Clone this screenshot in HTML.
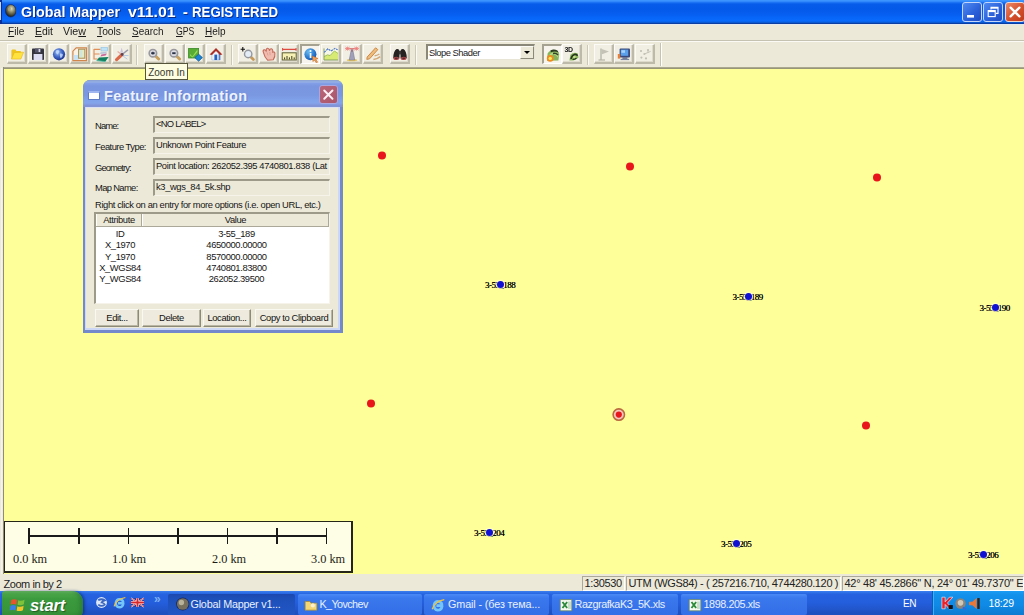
<!DOCTYPE html>
<html><head><meta charset="utf-8">
<style>
*{margin:0;padding:0;box-sizing:border-box}
html,body{width:1024px;height:615px;overflow:hidden;background:#ffff99;font-family:"Liberation Sans",sans-serif;font-size:11px;color:#000}
.a{position:absolute}
.t{position:absolute;white-space:nowrap;line-height:1}
/* title bar */
#title{left:0;top:0;width:1024px;height:24px;background:linear-gradient(#3e98ff 0,#3a92fd 1px,#1c74f4 2.5px,#075cea 4px,#0459e8 9px,#065ef0 14px,#0766f8 18px,#096bfb 21px,#0a58d2 22.5px,#0a3ea4 23.5px,#0a3ea4 24px);box-shadow:inset 2px 0 0 #0a2e96}
#title .cap{top:4.1px;font-weight:bold;font-size:15px;color:#fff;text-shadow:1px 1px 0 #0a2e8a;transform-origin:0 0;display:inline-block}
#title .glb{position:absolute;left:4.6px;top:4px;width:11.5px;height:13.5px;filter:blur(.5px)}
#title .le{position:absolute;left:0;top:2px;width:1px;height:18px;background:#c4d8fa}
.tb{position:absolute;top:2px;width:20px;height:20px;border:1px solid #c4d6fa;border-radius:3px;background:linear-gradient(135deg,#4f8af2,#2a5fd8 60%,#1f4cc4)}
.tb svg{position:absolute;left:0;top:0;width:18px;height:18px}
/* menu */
#menu{left:0;top:24px;width:1024px;height:16px;background:#ece9d8;border-top:1px solid #e6e9ee}
#menu span{position:absolute;top:-.2px;font-size:11px;line-height:13px;color:#1c1c1c;transform-origin:0 0;display:inline-block;white-space:nowrap}
#menu u{text-decoration-thickness:1px;text-underline-offset:1px}
#tool{left:0;top:40px;width:1024px;height:28px;background:#ece9d8;border-top:1px solid #c5c2b2;box-shadow:inset 0 1px 0 #fbfaf5}
#mline{left:3px;top:67px;width:1021px;height:2px;background:linear-gradient(#b3b199,#8f8d6c)}
#vline{left:3px;top:67px;width:1px;height:507px;background:#8f8d76}
.btn{position:absolute;top:3px;width:20px;height:20px;border:1px solid;border-width:1px 2px 2px 1px;border-color:#fcfbf6 #bdbaa9 #bdbaa9 #fcfbf6;background:#f1efe4;box-shadow:inset -1px -1px 0 #dedbcc}
.btn.dn{border-width:2px 1px 1px 2px;border-color:#a5a292 #fff #fff #a5a292;background:#f6f4ec;box-shadow:none}
.sep{position:absolute;top:4px;width:2px;height:20px;border-left:1px solid #cbc8b8;border-right:1px solid #fbfaf4}

.btn svg{position:absolute;left:.5px;top:.5px;width:16px;height:16px;filter:blur(.45px)}
.grip{position:absolute;top:4px;width:3px;height:20px;border-left:1px solid #fbfaf4;border-right:1px solid #cfccbc}
.tend{position:absolute;top:2px;width:2px;height:23px;border-left:1px solid #c5c2b2;border-right:1px solid #fff}
.combo{position:absolute;left:425.5px;top:3px;width:109.5px;height:16px;background:#fff;border:1px solid;border-width:2px 1px 1px 2px;border-color:#8a8878 #e8e5d6 #e8e5d6 #8a8878}
.combo span{position:absolute;left:1.5px;top:1px;font-size:9.4px;letter-spacing:-.5px;line-height:11px;white-space:nowrap;color:#1c1c1c}
.combo .dd{position:absolute;right:0;top:0;width:14.5px;height:13px;background:#ece9d8;border:1px solid;border-color:#fbfaf4 #8c897a #8c897a #fbfaf4}
.combo .dd i{position:absolute;left:3.5px;top:3.5px;border:3px solid transparent;border-top:3.5px solid #000;border-bottom:0}
/* map */
#map{left:3px;top:68px;width:1021px;height:506px;background:#ffff99}
#lb{left:0;top:68px;width:3px;height:506px;background:linear-gradient(90deg,#e8e5d2,#f6f4ea 1.5px,#ece9d8 3px)}
.rds{position:absolute;left:0;top:0;width:1021px;height:506px;filter:blur(.3px)}
.bd{position:absolute;width:7px;height:7px;border-radius:50%;background:#1010d2;box-shadow:0 0 1px 1px rgba(255,255,230,.8)}
.pl{position:absolute;white-space:nowrap;font-family:"Liberation Serif",serif;font-size:9px;line-height:9px;letter-spacing:-.55px;color:#000;text-shadow:0 0 .4px #222}

.sel{position:absolute;width:14px;height:14px;filter:blur(.3px)}
#scale{position:absolute;left:1px;top:453px;width:349px;height:52px;background:#fefee7;border:1px solid #262618;border-width:1px 2px 2px 1px}
#scale .ln{position:absolute;left:23.4px;top:13.2px;width:298.6px;height:1.6px;background:#1a1a1a}
#scale i{position:absolute;top:6px;width:1.6px;height:16px;background:#1a1a1a}
#scale span{position:absolute;top:31px;font-family:"Liberation Serif",serif;font-size:12.3px;line-height:12px;white-space:nowrap;color:#1c1c14}
#tip{position:absolute;z-index:5;left:145px;top:63px;width:43px;height:16.5px;background:#fdfde2;border:1px solid #55553c;font-size:10px;line-height:17px;text-align:center;white-space:nowrap;color:#38382c;overflow:hidden}
#dlg{position:absolute;left:80px;top:12px;width:260px;height:253px;background:#7488cc;border-radius:7px 7px 0 0;overflow:hidden}
#dlg .dt{position:absolute;left:0;top:0;width:260px;height:27px;background:linear-gradient(#8aa0d0 0,#96b0e4 2px,#819ee6 3.5px,#7a96e0 6px,#7a97e1 15px,#7fa2ea 20px,#84a4ea 23px,#8194d8 25.5px,#8394d4 27px)}
#dlg .dt .ic{position:absolute;left:5px;top:11px;width:12px;height:9px;background:#fff;border:1px solid #5f7cc6;border-top:2px solid #9fb6ee;border-radius:1px}
#dlg .dt span{position:absolute;left:21px;top:8px;font-weight:bold;font-size:14.5px;line-height:16px;letter-spacing:.38px;color:#edf2fc;white-space:nowrap;text-shadow:1px 1px 0 #6580cc}
#dlg .dt .cx{position:absolute;left:236px;top:5px;width:19px;height:19px;border-radius:3px;background:linear-gradient(135deg,#b9667a,#a9566a);border:1px solid #aaa6e0}
#dlg .dt .cx svg{position:absolute;left:0;top:0;width:17px;height:17px}
#dlg .lr{position:absolute;left:2px;top:27px;width:255px;height:223px;background:#ccd6f5}
#dlg .db{position:absolute;left:3px;top:27px;width:252px;height:221px;background:#ece9d8;box-shadow:inset 0 1px 0 #dbe1f2;font-size:9.4px;letter-spacing:-.38px;color:#161616}
#dlg .l{position:absolute;left:9px;white-space:nowrap;line-height:11px}
#dlg .f{position:absolute;left:67px;width:177px;height:17px;border:1px solid;border-width:2px 1px 1px 2px;border-color:#9d9a8a #f6f4ea #f6f4ea #9d9a8a;padding:0 0 0 1px;line-height:12px;white-space:nowrap;overflow:hidden}
#dlg .lst{position:absolute;left:8px;top:105px;width:236px;height:92px;background:#fff;border:1px solid;border-width:2px 1px 1px 2px;border-color:#9d9a8a #f6f4ea #f6f4ea #9d9a8a}
#dlg .hd{position:absolute;left:0;top:0;width:233px;height:13px;background:#ece9d8;border-bottom:1px solid #aca899}
#dlg .hd b{position:absolute;top:0;height:12px;font-weight:normal;text-align:center;line-height:12.5px;border-right:1px solid #aca899;border-left:1px solid #fff}
#dlg table{position:absolute;left:0;top:14px;border-collapse:collapse}
#dlg td{height:11.3px;line-height:11.3px;padding:0;text-align:center;white-space:nowrap}
#dlg td:first-child{width:48px}#dlg td+td{width:186px}
#dlg .pb{position:absolute;top:202px;height:18px;background:#eeebde;border:1px solid;border-color:#f9f8f1 #8d8a78 #8d8a78 #f9f8f1;box-shadow:inset -1px -1px 0 #b9b6a4;color:#111;text-align:center;line-height:15px;white-space:nowrap}
#status .zt{font-size:11px;letter-spacing:-.45px;color:#222}
.pane{letter-spacing:-.36px;color:#222}
#start{position:absolute;left:2px;top:0;width:81px;height:30px;border-radius:3px 11px 11px 3px;background:linear-gradient(#6cba66 0,#4aa648 3px,#3c9a3e 8px,#38953a 20px,#2f8232 30px);box-shadow:2px 0 3px rgba(10,40,120,.55),inset -3px 0 4px rgba(20,80,40,.35)}
#start .flag{position:absolute;left:6.5px;top:4.5px;width:18px;height:18px;filter:blur(.5px)}
#start span{position:absolute;left:28px;top:4.5px;color:#fff;font-style:italic;font-weight:bold;font-size:16.5px;line-height:19px;letter-spacing:-.1px;text-shadow:1px 1px 1px #1f5a22}
.ql{position:absolute;top:5px;width:13px;height:13px}.ql svg{width:13px;height:13px;filter:blur(.3px)}
.chev{position:absolute;left:154px;top:2px;color:#7cb0f6;font-size:12px;line-height:12px;font-weight:bold}
.tk .ti{position:absolute;left:7px;top:3.5px;width:14px;height:14px;filter:blur(.3px)}
.tk span{position:absolute;left:22.5px;top:0;letter-spacing:-.42px}
.en{position:absolute;left:903px;top:7px;color:#fff;font-size:10px;line-height:11px;letter-spacing:-.3px}
#tray{position:absolute;left:932px;top:0;width:92px;height:24px;background:linear-gradient(#1c9cf4 0,#1290ea 4px,#0f8ae6 14px,#0d7ad0 24px);border-left:1px solid #0a5cb8;box-shadow:inset 1px 0 0 #3ab0f8}
#tray .tr{position:absolute;top:6px;width:13px;height:13px;filter:blur(.3px)}
#tray span{position:absolute;left:55.5px;top:7px;color:#fff;font-size:10.5px;line-height:11px;letter-spacing:-.2px}
/* status */
#status{left:0;top:574px;width:1024px;height:17px;background:#ece9d8}
.pane{position:absolute;top:2px;height:15px;border:1px solid;border-color:#aca899 #fff #fff #aca899;font-size:11px;line-height:13px;padding-left:1.5px;white-space:nowrap;overflow:hidden}
/* taskbar */
#task{left:0;top:591px;width:1024px;height:24px;background:linear-gradient(#3a80f0 0,#2663e0 3px,#245edc 12px,#1f50c0 22px)}
.tk{position:absolute;top:3px;height:21px;border-radius:2px;background:linear-gradient(#4a8af5,#3a78ee 4px,#336fe6);color:#e9f0fd;font-size:10.8px;line-height:21px;white-space:nowrap;overflow:hidden}
.tk.act{background:linear-gradient(#1b48ae,#1e50ba 5px,#2156c4)}
</style></head><body>
<div id="title" class="a"><div class="le"></div><svg class="glb" viewBox="0 0 16 16" preserveAspectRatio="none"><defs><radialGradient id="g0" cx=".56" cy=".34" r=".62"><stop offset="0" stop-color="#deddc6"/><stop offset=".45" stop-color="#8c8a68"/><stop offset="1" stop-color="#26261c"/></radialGradient></defs><circle cx="8" cy="8" r="7.4" fill="url(#g0)" stroke="#162a66" stroke-width="1"/><path d="M4 5 Q6.5 3 8.5 5.2 Q7 8 5.4 8.6 Q3.6 7.4 4 5Z" fill="#a8a47c" opacity=".8"/></svg><span class="t cap" style="left:20.5px;transform:scaleX(.95)">Global Mapper</span><span class="t cap" style="left:127.5px;transform:scaleX(1.054)">v11.01</span><span class="t cap" style="left:182.8px">-</span><span class="t cap" style="left:192.3px;transform:scaleX(.882)">REGISTERED</span>
<div class="tb" style="left:962px"><svg viewBox="0 0 18 18"><rect x="4" y="12" width="7" height="2.6" fill="#fff"/></svg></div><div class="tb" style="left:983px"><svg viewBox="0 0 18 18"><path d="M7 6.5 L7 4.4 L14 4.4 L14 10.4 L12 10.4" fill="none" stroke="#fff" stroke-width="1.1"/><path d="M7 4.9 L14 4.9" stroke="#fff" stroke-width="1.6"/><rect x="4.2" y="7.6" width="7" height="6" fill="none" stroke="#fff" stroke-width="1.1"/><path d="M4.2 8.2 L11.2 8.2" stroke="#fff" stroke-width="1.8"/></svg></div><div class="tb" style="left:1005px;border-color:#f0d8d0;background:linear-gradient(135deg,#ea8a68,#d4502c 55%,#c03a1a)"><svg viewBox="0 0 18 18"><path d="M4.6 4.6 L13.4 13.4 M13.4 4.6 L4.6 13.4" stroke="#fff" stroke-width="2.3" stroke-linecap="round"/></svg></div></div>
<div id="menu" class="a"><span style="left:7.5px;transform:scaleX(.915)"><u>F</u>ile</span><span style="left:34.5px;transform:scaleX(.95)"><u>E</u>dit</span><span style="left:63px;transform:scaleX(.973)">Vie<u>w</u></span><span style="left:97px;transform:scaleX(.935)"><u>T</u>ools</span><span style="left:132.3px;transform:scaleX(.903)"><u>S</u>earch</span><span style="left:175.5px;transform:scaleX(.79)"><u>G</u>PS</span><span style="left:204.7px;transform:scaleX(.907)"><u>H</u>elp</span></div>
<div id="tool" class="a">
<div class="btn" style="left:7px"><svg viewBox="0 0 16 16"><path d="M2.4 4.6 L2.4 13 L11.8 13 L11.8 5 L7.4 5 L6.4 3.4 L3.2 3.4 Z" fill="#eec41e"/><path d="M2.5 13.1 L5.2 6.6 L14.6 6.2 L11.8 13.1 Z" fill="#ffe23e" stroke="#e2b41a" stroke-width=".6"/></svg></div>
<div class="btn" style="left:28px"><svg viewBox="0 0 16 16"><rect x="2" y="2.5" width="12" height="11.5" rx=".8" fill="#34343f"/><rect x="5" y="2.5" width="6" height="4" fill="#55556a"/><rect x="8.6" y="3" width="1.6" height="3" fill="#d8d8e8"/><rect x="3.6" y="8" width="8.8" height="6" fill="#dcdcf2"/></svg></div>
<div class="btn" style="left:49px"><svg viewBox="0 0 16 16"><defs><radialGradient id="gl" cx=".4" cy=".35" r=".7"><stop offset="0" stop-color="#9fc0f4"/><stop offset=".55" stop-color="#3c63c4"/><stop offset="1" stop-color="#1b2f86"/></radialGradient></defs><circle cx="8" cy="8.3" r="6.1" fill="url(#gl)"/><path d="M5 4.5 Q7 3.5 8.5 5 Q7.5 7 6.8 8.5 Q5.5 8 4.6 6.2 Z M9 7.5 Q11 7 12 8.8 Q11.3 11.6 9.6 12.2 Q8.6 10 9 7.5 Z" fill="#c6dafa" opacity=".85"/></svg></div>
<div class="btn" style="left:70px"><svg viewBox="0 0 16 16"><path d="M4.2 1.8 L14.4 1.8 L14.4 14.6 L.9 14.6 L.9 5.2 Z" fill="#fbf1e4" stroke="#cf854c" stroke-width="1.2"/><path d="M1.6 9 L6.6 9 L6.6 13.9 L1.6 13.9 Z" fill="#c4e2f8"/><rect x="6.6" y="3.2" width="6.2" height="9" fill="#e4ecc0" stroke="#a58c52" stroke-width="1"/><rect x="7.6" y="4.2" width="2.6" height="7" fill="#cfe6e0"/></svg></div>
<div class="btn" style="left:91px"><svg viewBox="0 0 16 16"><path d="M1 3 L1 13.6 M1 3.4 L7.4 3.4 M1 8 L6.6 8 M1 13 L4.6 13" stroke="#e09058" stroke-width="1.2" fill="none"/><rect x="8" y="1.6" width="6.6" height="3.4" fill="#bfe2f6" stroke="#8cc0e0" stroke-width=".6"/><path d="M7.6 6.2 L14 5.8 L13 7.6 L7 8 Z" fill="#b8c4d8"/><path d="M8.4 8.4 L14 7.4 L12.6 9.6 L7.4 10.4 Z" fill="#c86a9a"/><path d="M6 11.4 L15.6 11 L12.4 15.6 L3.6 14.6 Z" fill="#128060"/><path d="M3.6 14.6 L12.4 15.6" stroke="#46b8a0" stroke-width=".9"/></svg></div>
<div class="btn" style="left:112px"><svg viewBox="0 0 16 16"><path d="M7.6 1.4 L6.2 6.8 L9.2 6.8 Z" fill="#cbc4dc"/><path d="M8.6 8 L13.6 4.2" stroke="#9c9ca8" stroke-width="1.5" stroke-linecap="round"/><path d="M9 9.4 L14.6 9.6 M9 10 L13.4 13.2" stroke="#b4cce6" stroke-width="1"/><path d="M3.6 5.6 L7 8" stroke="#e4aca2" stroke-width="1.2"/><path d="M2.6 13.6 L7.6 9" stroke="#da6a4a" stroke-width="3.2" stroke-linecap="round"/><circle cx="8.2" cy="8.4" r="1.4" fill="#5a4452"/></svg></div>
<div class="sep" style="left:136px"></div>
<div class="btn" style="left:144px"><svg viewBox="0 0 16 16"><path d="M9.8 10.2 L12.6 13" stroke="#c9a05c" stroke-width="3" stroke-linecap="round"/><circle cx="6.9" cy="7.2" r="3.7" fill="#dedee6" stroke="#9a9a9e" stroke-width="1.7"/><path d="M5.2 7.2 L8.6 7.2" stroke="#2a3246" stroke-width="1.9"/><path d="M6.9 5.8 L6.9 8.6" stroke="#2a3246" stroke-width="1.2"/></svg></div>
<div class="btn" style="left:165px"><svg viewBox="0 0 16 16"><path d="M9.8 10.2 L12.6 13" stroke="#c9a05c" stroke-width="3" stroke-linecap="round"/><circle cx="6.9" cy="7.2" r="3.7" fill="#dedee6" stroke="#9a9a9e" stroke-width="1.7"/><path d="M5.2 7.2 L8.6 7.2" stroke="#2a3246" stroke-width="1.9"/></svg></div>
<div class="btn" style="left:185px"><svg viewBox="0 0 16 16"><rect x="1.6" y="2.4" width="10" height="9.6" fill="#58ac34" stroke="#3c8a2a" stroke-width=".8"/><path d="M3 8 L5.4 10.4 L10.4 3.6 L10.4 6 L5.6 11.4 L3 9.4 Z" fill="#9ade5a"/><path d="M11.6 8.2 L15.4 11.6 L11.6 15.2 L7.8 11.6 Z" fill="#1c82d2" stroke="#0e5c98" stroke-width=".8"/></svg></div>
<div class="btn" style="left:206px"><svg viewBox="0 0 16 16"><path d="M3.8 7.4 L8 4.2 L12.2 7.4 L12.2 14 L3.8 14 Z" fill="#eef4fc" stroke="#a8bce0" stroke-width=".7"/><path d="M10.6 7.4 L12.2 7.4 L12.2 14 L10.6 14 Z" fill="#5a7cc0"/><rect x="6.4" y="8.6" width="2.8" height="5.4" fill="#2460c0"/><path d="M1.6 8.6 L8 2 L14.4 8.6 L12 9 L8 5 L4 9 Z" fill="#ac3028"/></svg></div>
<div class="sep" style="left:231px"></div>
<div class="btn" style="left:238px"><svg viewBox="0 0 16 16"><path d="M10.4 10.6 L13.4 13.6" stroke="#c79a5a" stroke-width="2.8" stroke-linecap="round"/><circle cx="8.2" cy="8" r="3.7" fill="#e4ecf6" stroke="#94989e" stroke-width="1.4"/><path d="M.6 3.2 L5 3.2 M2.8 1 L2.8 5.4" stroke="#111" stroke-width="1.1"/></svg></div>
<div class="btn" style="left:259px"><svg viewBox="0 0 16 16"><path d="M2.4 6.4 Q1.6 4.4 3 3.8 Q4.4 3.4 5.4 5.6 Q4.8 2.6 6.4 2.2 Q8 2 8.6 4.8 Q8.8 2.6 10.4 2.8 Q12 3.2 11.8 6.2 Q13.4 5.4 13.9 7 Q14.4 11 12.2 13.8 L6.6 14.2 Q3.6 11.4 2.4 6.4 Z" fill="#f0bcb0" stroke="#c46c5a" stroke-width="1.1"/><path d="M6 6.4 L7 9.4 M8.8 6 L9.2 9.2" stroke="#dc988a" stroke-width=".8"/></svg></div>
<div class="btn" style="left:279px"><svg viewBox="0 0 16 16"><path d="M1.4 3.4 L15.2 3.4" stroke="#dc4a40" stroke-width="1.3"/><path d="M1.6 2 L1.6 4.8 M15 2 L15 4.8" stroke="#dc4a40" stroke-width="1"/><rect x="1.2" y="6.8" width="14" height="7.2" fill="#f6f0b4" stroke="#5e5e34" stroke-width="1"/><path d="M3.6 13.4 L3.6 11.4 M6 13.4 L6 10 M8.4 13.4 L8.4 11.4 M10.8 13.4 L10.8 10 M13.2 13.4 L13.2 11.4" stroke="#3c3c24" stroke-width="1"/></svg></div>
<div class="btn dn" style="left:300px"><svg viewBox="0 0 16 16"><defs><radialGradient id="gi" cx=".35" cy=".3" r=".8"><stop offset="0" stop-color="#6cbcf0"/><stop offset=".6" stop-color="#2a7ad0"/><stop offset="1" stop-color="#1650a0"/></radialGradient></defs><circle cx="7.4" cy="7.2" r="6" fill="url(#gi)"/><rect x="6.7" y="6" width="1.7" height="5" fill="#fff"/><circle cx="7.5" cy="4" r="1.05" fill="#fff"/><path d="M9.4 9 L15 11.6 L12.8 12.3 L14.6 15.2 L13.2 15.8 L11.6 13 L10 14.6 Z" fill="#f2a25a" stroke="#c0692a" stroke-width=".6"/></svg></div>
<div class="btn" style="left:321px"><svg viewBox="0 0 16 16"><rect x="1" y="2.4" width="14" height="11.6" fill="#f7f7e6"/><path d="M1 14 L1 10.6 L4.6 8.8 L7 9.6 L11.4 5 L15 7.4 L15 14 Z" fill="#d6ea74"/><path d="M1 10.6 L4.6 8.8 L7 9.6 L11.4 5 L15 7.4" stroke="#9cbc54" stroke-width=".9" fill="none"/><path d="M1 2.4 L1 14 L15 14" stroke="#86a060" stroke-width="1" fill="none"/><path d="M1.2 6.4 L4.8 2.8 L8 5 L12 2.4 L14.6 3.8" stroke="#4a74c8" stroke-width="1.1" fill="none" stroke-dasharray="2.2 .8"/></svg></div>
<div class="btn" style="left:342px"><svg viewBox="0 0 16 16"><ellipse cx="8" cy="14.2" rx="5.2" ry="1.1" fill="#e8c85c"/><path d="M5.2 14 L7 5 L9 5 L10.8 14 Z" fill="#a0a0b8" stroke="#7c7c94" stroke-width=".6"/><g stroke="#ee7c7a" stroke-width=".85"><path d="M1 2.6 L6.2 2.6 M1.6 1 L5.6 4.2 M1.6 4.2 L5.6 1 M3.6 .6 L3.6 4.6"/><path d="M9.8 2.6 L15 2.6 M10.4 1 L14.4 4.2 M10.4 4.2 L14.4 1 M12.4 .6 L12.4 4.6"/></g><path d="M5.6 2.8 L10.4 2.8" stroke="#d87070" stroke-width="1.3"/><circle cx="8" cy="4.6" r="1.3" fill="#9a7a8a"/></svg></div>
<div class="btn" style="left:363px"><svg viewBox="0 0 16 16"><path d="M2.2 11 L10.6 1.8 L12.8 3.6 L4.6 12.8 L1.8 13.4 Z" fill="#eebc7c" stroke="#cc8844" stroke-width="1"/><path d="M9.6 9.8 Q12 9.6 14.4 8" stroke="#d4a878" stroke-width="1.5" fill="none"/><path d="M8.4 13.6 Q12 13.2 15.2 10.6" stroke="#d4a878" stroke-width="1.5" fill="none"/></svg></div>
<div class="btn" style="left:390px"><svg viewBox="0 0 16 16"><path d="M1.2 12 Q1.4 5 4.6 3 Q7 2.4 7.6 5 L7.4 12.6 Q4.4 14 1.2 12 Z M14.8 12 Q14.6 5 11.4 3 Q9 2.4 8.4 5 L8.6 12.6 Q11.6 14 14.8 12 Z" fill="#262222"/><rect x="6.8" y="5" width="2.4" height="3.4" fill="#3a3434"/><ellipse cx="4.3" cy="12.4" rx="2.9" ry="1.7" fill="#b04a4c"/><ellipse cx="11.7" cy="12.4" rx="2.9" ry="1.7" fill="#b04a4c"/><ellipse cx="4.3" cy="12.4" rx="1.5" ry=".8" fill="#5a2c30"/><ellipse cx="11.7" cy="12.4" rx="1.5" ry=".8" fill="#5a2c30"/></svg></div>
<div class="sep" style="left:415px"></div>
<div class="combo"><span>Slope Shader</span><div class="dd"><i></i></div></div>
<div class="btn dn" style="left:542px"><svg viewBox="0 0 16 16"><path d="M2 13.8 L2.6 6.4 Q6 1.8 10 3 Q13.4 3.4 14.2 7.4 L13.4 13.4 Z" fill="#86b45c"/><path d="M3 12 Q3.4 7 7.4 5.4 Q11 4.6 13.4 7.6 L13 10.4 Q10.6 7 7.6 7.6 Q5 8.6 4.6 12 Z" fill="#b8d880"/><path d="M5.4 3.6 Q8.6 1.6 12.4 3.4 L13.6 5.6 Q10 3.6 6 5.2 Z" fill="#2c3a22"/><path d="M8 6.4 Q11 5.8 13 8" stroke="#33422a" stroke-width="1.5" fill="none"/><circle cx="5.2" cy="11.4" r="3.3" fill="#f08a1c"/><circle cx="5.2" cy="11.4" r="1.7" fill="#fde85a"/></svg></div>
<div class="btn" style="left:562px"><svg viewBox="0 0 16 16"><text x=".6" y="6.4" font-family="Liberation Sans" font-size="7" font-weight="bold" fill="#222" letter-spacing="-.4">3D</text><path d="M5.4 14.4 L6.4 8.8 Q9.4 5.6 13.6 7.2 L14.6 11.4 Q11 15.2 5.4 14.4 Z" fill="#8cb860"/><path d="M7 13 Q7.4 9.4 10.6 8.4 Q13 8 13.4 9.8" stroke="#26361e" stroke-width="1.6" fill="none"/><path d="M8.6 13.4 Q10.6 13.6 12.4 12" stroke="#26361e" stroke-width="1.4" fill="none"/><circle cx="10.4" cy="11" r="1.3" fill="#c8e08c"/></svg></div>
<div class="sep" style="left:587px"></div>
<div class="btn" style="left:594px"><svg viewBox="0 0 16 16"><path d="M5 2.5 L5 14" stroke="#b4b2a6" stroke-width="1.3"/><path d="M5.6 3 L13 5.6 L5.6 8.4 Z" fill="#c4c2b6"/><path d="M2.5 14 L9 14" stroke="#b4b2a6" stroke-width="1.2"/></svg></div>
<div class="btn" style="left:614px"><svg viewBox="0 0 16 16"><rect x="3.6" y="2.4" width="10.4" height="9" rx="1" fill="#3a4a7c"/><rect x="4.8" y="3.6" width="7.4" height="6.2" fill="#5aa0ea"/><rect x="5.4" y="4.2" width="3.6" height="2.6" fill="#a6d2fa"/><rect x="6.4" y="11.4" width="5" height="1.4" fill="#55607c"/><rect x="4.6" y="12.8" width="8.6" height="1.3" fill="#7a86a0"/><rect x="1.8" y="8" width="2.4" height="4.6" fill="#e8803a"/></svg></div>
<div class="btn" style="left:635px"><svg viewBox="0 0 16 16"><g fill="#c2c0b4"><circle cx="4" cy="5" r="1.1"/><circle cx="7.4" cy="8" r="1.1"/><circle cx="4.4" cy="11.6" r="1.1"/><circle cx="9" cy="12.4" r="1.1"/><circle cx="11" cy="4" r="1.1"/></g><path d="M7.4 8 L13.6 5.4 M11 4 L11 7" stroke="#c2c0b4" stroke-width=".9"/></svg></div>
<div class="tend" style="left:660px"></div>
</div>
<div id="lb" class="a"></div><div id="mline" class="a" style="z-index:2"></div><div id="vline" class="a" style="z-index:2"></div>
<div id="map" class="a">
<svg class="rds" viewBox="0 0 1021 506"><circle cx="379" cy="87.4" r="4" fill="#e8151a"/><circle cx="627" cy="98.4" r="4" fill="#e8151a"/><circle cx="874" cy="109.4" r="4" fill="#e8151a"/><circle cx="368" cy="335.4" r="4" fill="#e8151a"/><circle cx="863" cy="357.4" r="4" fill="#e8151a"/><circle cx="615.8" cy="346.6" r="5.7" fill="#f9c6be" stroke="#b96a3e" stroke-width="1.6"/><circle cx="615.8" cy="346.6" r="3.1" fill="#e8151a"/></svg>
<span class="pl" style="left:482px;top:213px">3-55_188</span><div class="bd" style="left:494px;top:213px"></div>
<span class="pl" style="left:729.5px;top:225px">3-55_189</span><div class="bd" style="left:741.5px;top:225px"></div>
<span class="pl" style="left:976.5px;top:236px">3-55_190</span><div class="bd" style="left:988.5px;top:236px"></div>
<span class="pl" style="left:471px;top:461px">3-55_204</span><div class="bd" style="left:483px;top:461px"></div>
<span class="pl" style="left:718px;top:472px">3-55_205</span><div class="bd" style="left:730px;top:472px"></div>
<span class="pl" style="left:965px;top:483px">3-55_206</span><div class="bd" style="left:977px;top:483px"></div>
<div id="scale"><div class="ln"></div>
<i style="left:23.4px"></i><i style="left:73px"></i><i style="left:122.5px"></i><i style="left:172.1px"></i><i style="left:221.6px"></i><i style="left:271.2px"></i><i style="left:320.7px"></i>
<span style="left:8px">0.0 km</span><span style="left:107px">1.0 km</span><span style="left:207px">2.0 km</span><span style="left:306px">3.0 km</span></div>
<div id="dlg">
 <div class="dt"><div class="ic"></div><span>Feature Information</span><div class="cx"><svg viewBox="0 0 18 18"><path d="M4.5 4.8 L13.2 13.5 M13.2 4.8 L4.5 13.5" stroke="#fdeff3" stroke-width="2.1" stroke-linecap="round"/></svg></div></div>
 <div class="lr"></div>
 <div class="db">
  <span class="l" style="top:13px;letter-spacing:-.85px">Name:</span><div class="f" style="top:9px;letter-spacing:-.72px">&lt;NO LABEL&gt;</div>
  <span class="l" style="top:34px;letter-spacing:-.52px">Feature Type:</span><div class="f" style="top:30px">Unknown Point Feature</div>
  <span class="l" style="top:55px;letter-spacing:-.9px">Geometry:</span><div class="f" style="top:51px">Point location: 262052.395 4740801.838 (Lat</div>
  <span class="l" style="top:75px;letter-spacing:-.65px">Map Name:</span><div class="f" style="top:72px">k3_wgs_84_5k.shp</div>
  <span class="l" style="top:92px">Right click on an entry for more options (i.e. open URL, etc.)</span>
  <div class="lst"><div class="hd"><b style="left:0;width:46px">Attribute</b><b style="left:46px;width:187px">Value</b></div>
   <table>
   <tr><td>ID</td><td>3-55_189</td></tr><tr><td>X_1970</td><td>4650000.00000</td></tr><tr><td>Y_1970</td><td>8570000.00000</td></tr><tr><td>X_WGS84</td><td>4740801.83800</td></tr><tr><td>Y_WGS84</td><td>262052.39500</td></tr></table></div>
  <div class="pb" style="left:9px;width:44px">Edit...</div><div class="pb" style="left:56px;width:59px">Delete</div><div class="pb" style="left:117px;width:48px">Location...</div><div class="pb" style="left:169px;width:78px">Copy to Clipboard</div>
 </div>
</div>
</div>
<div id="tip">Zoom In</div>
<div id="status" class="a"><span class="t zt" style="left:3.5px;top:5px">Zoom in by 2</span>
<div class="pane" style="left:582px;width:43px">1:30530</div>
<div class="pane" style="left:626px;width:215px">UTM (WGS84) - ( 257216.710, 4744280.120 )</div>
<div class="pane" style="left:842px;width:182px;letter-spacing:-.27px">42° 48' 45.2866" N, 24° 01' 49.7370" E</div>
</div>
<div id="task" class="a">
<div id="start"><svg class="flag" viewBox="0 0 16 16"><path d="M2 3.6 Q4.6 2.2 7.2 3.6 L6.6 7.6 Q4 6.4 1.4 7.6 Z" fill="#e8542c"/><path d="M8.2 3.8 Q11 5 13.8 3.4 L13.2 7.4 Q10.4 8.8 7.6 7.8 Z" fill="#7ec23c"/><path d="M1.2 8.8 Q3.8 7.4 6.4 8.8 L5.8 12.8 Q3.2 11.6 .6 12.8 Z" fill="#3a7ee8"/><path d="M7.4 9 Q10.2 10.2 13 8.6 L12.4 12.6 Q9.6 14 6.8 13 Z" fill="#f4c42a"/></svg><span>start</span></div>
<div class="ql" style="left:95px"><svg viewBox="0 0 12 12"><circle cx="6" cy="6" r="5" fill="#dfe8f8"/><path d="M3 4 Q6 2 9 4 Q6.4 4.8 6 6 Q8.4 6.4 9 8 Q6 10.4 3 8" stroke="#3a66c0" stroke-width="1.6" fill="none"/></svg></div>
<div class="ql" style="left:113px"><svg viewBox="0 0 12 12"><path d="M9.6 6.8 Q9 10.4 5.8 10.4 Q2.4 10 2.6 6 Q3.4 2.6 6.6 3 Q9.6 3.6 9.4 6.6 L4.6 6.6" stroke="#74c6fa" stroke-width="2.3" fill="none"/><path d="M1 9.6 Q3 3 11.4 1.4" stroke="#f2c23a" stroke-width="1.1" fill="none"/></svg></div>
<div class="ql" style="left:131px"><svg viewBox="0 0 12 12"><rect x="0" y="2" width="12" height="8" fill="#2c3c9c"/><path d="M0 2 L12 10 M12 2 L0 10" stroke="#fff" stroke-width="1.4"/><path d="M0 2 L12 10 M12 2 L0 10" stroke="#d8282c" stroke-width=".7"/><path d="M6 2 L6 10 M0 6 L12 6" stroke="#fff" stroke-width="2.6"/><path d="M6 2 L6 10 M0 6 L12 6" stroke="#d8282c" stroke-width="1.7"/></svg></div>
<span class="chev">»</span>
<div class="tk act" style="left:168px;width:127px"><svg class="ti" style="left:8px;top:2.5px;width:13.5px;height:14px" viewBox="0 0 12 12"><circle cx="6" cy="6" r="5.8" fill="#14245c"/><circle cx="6" cy="6" r="5.2" fill="#77705c"/><circle cx="4.8" cy="4.6" r="2.4" fill="#b8b29a"/></svg><span style="letter-spacing:-.22px">Global Mapper v1...</span></div>
<div class="tk" style="left:298px;width:123.5px"><svg class="ti" style="left:5.5px" viewBox="0 0 12 12"><path d="M1 3 L5 3 L6 4.4 L11 4.4 L11 10.4 L1 10.4 Z" fill="#f4d674" stroke="#a88a2a" stroke-width=".6"/><circle cx="7.6" cy="6.4" r="1.8" fill="#f8f0d0"/></svg><span style="left:21.5px;letter-spacing:-.6px">K_Yovchev</span></div>
<div class="tk" style="left:424px;width:125px"><svg class="ti" viewBox="0 0 12 12"><path d="M9.6 6.8 Q9 10.4 5.8 10.4 Q2.4 10 2.6 6 Q3.4 2.6 6.6 3 Q9.6 3.6 9.4 6.6 L4.6 6.6" stroke="#74c6fa" stroke-width="2.3" fill="none"/><path d="M1 9.6 Q3 3 11.4 1.4" stroke="#f2c23a" stroke-width="1.1" fill="none"/></svg><span style="left:24px;letter-spacing:-.12px">Gmail - (без тема...</span></div>
<div class="tk" style="left:552px;width:126px"><svg class="ti" viewBox="0 0 12 12"><rect x="1" y="1.4" width="10" height="9.6" fill="#f4f8f0" stroke="#6a8a6a" stroke-width=".7"/><path d="M3 3.4 L7 8.6 M7 3.4 L3 8.6" stroke="#2a8a3a" stroke-width="1.6"/><rect x="7.6" y="3" width="2.6" height="6.4" fill="#c8dcc8"/></svg><span>RazgrafkaK3_5K.xls</span></div>
<div class="tk" style="left:681px;width:126px"><svg class="ti" viewBox="0 0 12 12"><rect x="1" y="1.4" width="10" height="9.6" fill="#f4f8f0" stroke="#6a8a6a" stroke-width=".7"/><path d="M3 3.4 L7 8.6 M7 3.4 L3 8.6" stroke="#2a8a3a" stroke-width="1.6"/><rect x="7.6" y="3" width="2.6" height="6.4" fill="#c8dcc8"/></svg><span>1898.205.xls</span></div>
<span class="en">EN</span>
<div id="tray"><svg class="tr" style="left:6.5px;width:14px;height:14px;top:5px" viewBox="0 0 12 12"><path d="M1.6 1 L4.4 1 L4.4 5 L8 1 L11 1 L6.4 6 L11 11 L7.8 11 L4.4 7.2 L4.4 11 L1.6 11 Z" fill="#e8222a" stroke="#fff" stroke-width=".5"/><rect x="7.4" y="7.8" width="3.6" height="3.4" fill="#111"/></svg>
<svg class="tr" style="left:21px" viewBox="0 0 12 12"><circle cx="6" cy="6" r="4.8" fill="#8c8478"/><circle cx="6" cy="5.4" r="2.6" fill="#d0c8b8"/><path d="M8 9.6 L11 11.4" stroke="#3a66d8" stroke-width="1.6"/></svg>
<svg class="tr" style="left:35px" viewBox="0 0 12 12"><path d="M1 4.4 L4 4.4 L8 1 L8 11 L4 7.6 L1 7.6 Z" fill="#e8783a"/><path d="M8.6 1 L10.8 1 L10.8 11 L8.6 11 Z" fill="#2a2420"/></svg>
<span>18:29</span></div>
</div>
</body></html>
